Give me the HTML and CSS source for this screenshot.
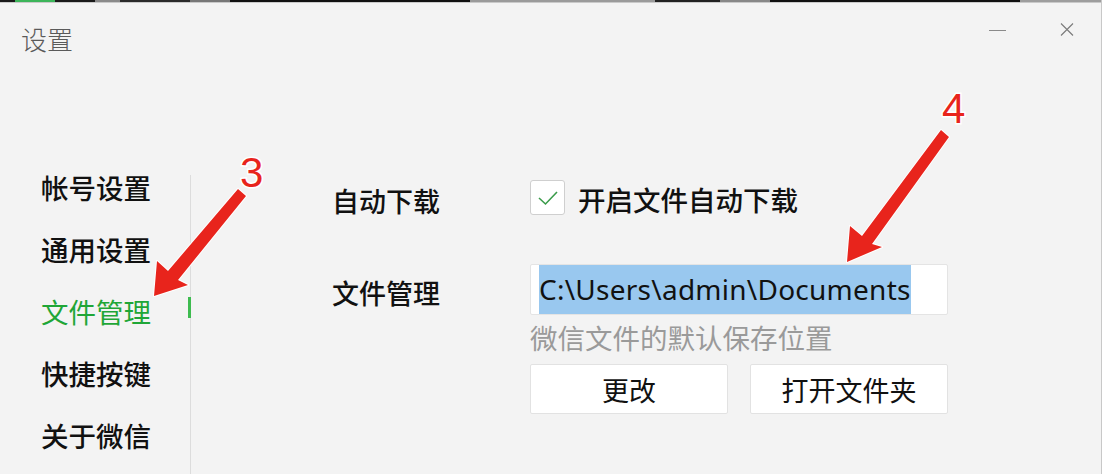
FILE: index.html
```html
<!DOCTYPE html>
<html lang="zh-CN">
<head>
<meta charset="utf-8">
<title>设置</title>
<link rel="stylesheet" href="styles.css">
</head>
<body>
<div class="window">
  <div class="topstrip"></div>
  <header class="titlebar">
    <div class="title">设置</div>
    <div class="winbtns">
      <span class="min"></span>
      <svg class="close" width="14" height="13" viewBox="0 0 14 13"><path d="M1 0.5 L13 12.5 M13 0.5 L1 12.5" stroke="#7a7a7a" stroke-width="1.1" fill="none"/></svg>
    </div>
  </header>
  <div class="main">
    <nav class="sidebar">
      <div class="navitem">帐号设置</div>
      <div class="navitem">通用设置</div>
      <div class="navitem active">文件管理<span class="indicator"></span></div>
      <div class="navitem">快捷按键</div>
      <div class="navitem">关于微信</div>
    </nav>
    <section class="content">
      <div class="row row-auto">
        <div class="label">自动下载</div>
        <label class="check">
          <span class="box"><svg width="22" height="16" viewBox="0 0 22 16"><path d="M2 8 L8.5 14 L20 2" stroke="#3a9b4a" stroke-width="1.6" fill="none"/></svg></span>
          <span class="checktext">开启文件自动下载</span>
        </label>
      </div>
      <div class="row row-file">
        <div class="label label-file">文件管理</div>
        <div class="controls">
          <div class="pathbox"><span class="sel">C:\Users\admin\Documents</span></div>
          <div class="hint">微信文件的默认保存位置</div>
          <div class="buttons">
            <button class="btn">更改</button>
            <button class="btn">打开文件夹</button>
          </div>
        </div>
      </div>
    </section>
  </div>
  <svg class="annot" width="1102" height="474" viewBox="0 0 1102 474">
    <g fill="#e8241c" stroke="#ffffff" stroke-width="2" stroke-linejoin="round" paint-order="stroke">
      <polygon points="154,296 157,261 168,271 238,189 246,196 178,280 188,285"/>
      <polygon points="847,262 850,226 862,236 941,130 949,137 872,244 882,247"/>
    </g>
    <g class="num" fill="#e8241c" stroke="#ffffff" stroke-width="3" paint-order="stroke">
      <text x="240" y="187">3</text>
      <text x="942" y="123">4</text>
    </g>
  </svg>
</div>
</body>
</html>
```

FILE: styles.css
```css
html, body {
  margin: 0;
  padding: 0;
}
body {
  width: 1102px;
  height: 474px;
  overflow: hidden;
  background: #f2f2f2;
  font-family: "Noto Sans CJK SC", "Noto Sans", sans-serif;
}
.window {
  position: relative;
  width: 1101px;
  height: 474px;
  border-right: 1px solid #c8c8c8;
  background: #f3f3f3;
}
.topstrip {
  height: 2px;
  background: linear-gradient(90deg,
    #1a1a1a 0 15px, #3cb55a 15px 55px, #1a1a1a 55px 95px, #8a8a8a 95px 120px,
    #2a2a2a 120px 190px, #777 190px 230px, #111 230px 470px, #9a9a9a 470px 655px,
    #222 655px 720px, #888 720px 770px, #111 770px 1020px, #9d9d9d 1020px);
  border-bottom: 1px solid #c9c9c9;
}
.titlebar {
  height: 60px;
  display: flex;
  justify-content: space-between;
}
.title {
  padding: 19px 0 0 21px;
  font-size: 26px;
  line-height: 34px;
  font-weight: 300;
  color: #5a5a5a;
}
.winbtns {
  display: flex;
  align-items: flex-start;
  padding: 20px 27px 0 0;
  gap: 54px;
}
.min {
  display: block;
  width: 17px;
  height: 1px;
  margin-top: 7px;
  background: #8a8a8a;
}
.close {
  display: block;
}
.main {
  display: flex;
  margin-top: 93px;
}
.sidebar {
  width: 190px;
  flex: none;
}
.navitem {
  position: relative;
  height: 62px;
  line-height: 62px;
  padding-left: 41px;
  font-size: 27.5px;
  font-weight: 500;
  color: #111;
}
.navitem.active {
  color: #1fa637;
  font-weight: 400;
}
.indicator {
  position: absolute;
  right: -1px;
  top: 17px;
  width: 3px;
  height: 21px;
  background: #3dbb4f;
}
.content {
  flex: 1;
  margin-top: 19px;
  height: 299px;
  border-left: 1px solid #dcdcdc;
  padding-left: 141px;
}
.row {
  display: flex;
}
.label {
  width: 198px;
  flex: none;
  font-size: 27px;
  font-weight: 500;
  color: #111;
}
.row-auto {
  margin-top: 5px;
  height: 35px;
  align-items: center;
}
.row-auto .label {
  line-height: 35px;
  padding-top: 6px;
}
.check {
  display: flex;
  align-items: center;
}
.box {
  box-sizing: border-box;
  width: 35px;
  height: 35px;
  background: #ffffff;
  border: 1px solid #cfcfcf;
  border-radius: 3px;
  display: flex;
  align-items: center;
  justify-content: center;
}
.checktext {
  margin-left: 13px;
  font-size: 27.5px;
  font-weight: 500;
  color: #111;
  line-height: 35px;
  padding-top: 4px;
}
.row-file {
  margin-top: 49px;
}
.label-file {
  line-height: 51px;
  padding-top: 3px;
}
.controls {
  width: 418px;
}
.pathbox {
  box-sizing: border-box;
  height: 51px;
  background: #ffffff;
  border: 1px solid #e4e4e4;
  border-radius: 2px;
  padding-left: 8px;
}
.sel {
  display: inline-block;
  height: 49px;
  line-height: 49px;
  background: #99c8ef;
  color: #111111;
  font-family: "Noto Sans", "Open Sans", sans-serif;
  font-size: 28px;
  letter-spacing: 0.25px;
}
.hint {
  margin-top: 7px;
  line-height: 30px;
  font-size: 27.5px;
  color: #9a9a9a;
}
.buttons {
  display: flex;
  justify-content: space-between;
  margin-top: 12px;
}
.btn {
  box-sizing: border-box;
  width: 198px;
  height: 50px;
  background: #ffffff;
  border: 1px solid #e2e2e2;
  border-radius: 2px;
  font-family: "Noto Sans CJK SC", sans-serif;
  font-size: 27px;
  font-weight: 400;
  color: #111;
  padding: 0;
}
.annot {
  position: absolute;
  left: 0;
  top: 0;
  pointer-events: none;
}
.num text {
  font-family: "Liberation Sans", sans-serif;
  font-size: 42px;
}
```
